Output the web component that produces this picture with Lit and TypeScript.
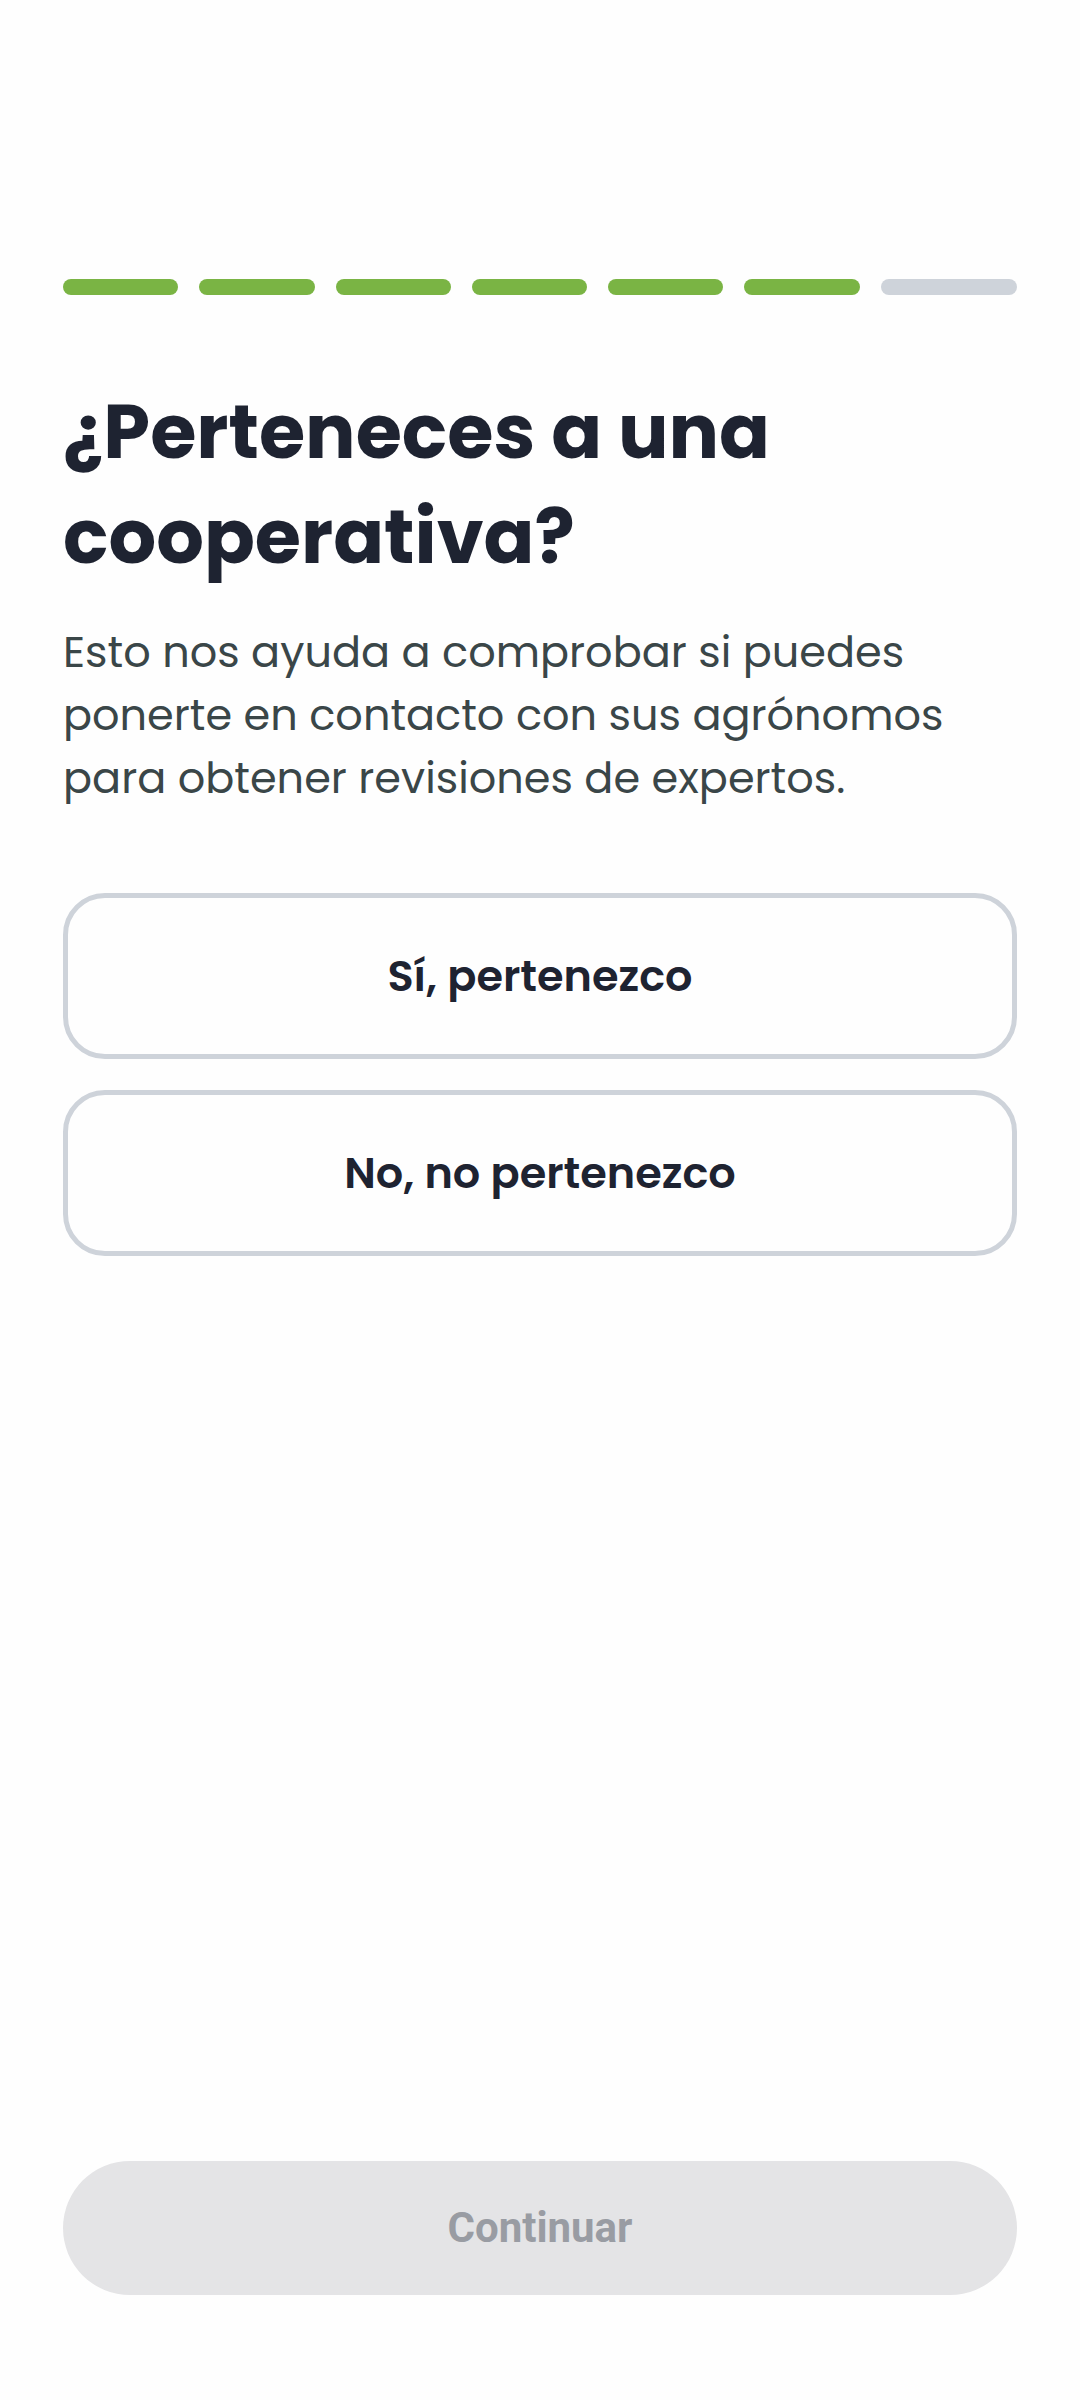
import { LitElement, html, css } from "lit";
import { customElement, property, state } from "lit/decorators.js";
import { classMap } from "lit/directives/class-map.js";

@customElement("step-progress")
class StepProgress extends LitElement {
  @property({ type: Number }) total = 7;
  @property({ type: Number }) current = 0;

  static styles = css`
    :host {
      display: block;
    }

    .steps {
      display: grid;
      grid-auto-flow: column;
      grid-auto-columns: 1fr;
    }

    .step {
      padding-right: 21px;
    }

    .step:last-child {
      padding-right: 0;
    }

    .bar {
      height: 16px;
      border-radius: 8px;
      background-color: #ced3da;
    }

    .done {
      background-color: #7ab444;
    }
  `;

  render() {
    return html`
      <div
        class="steps"
        role="progressbar"
        aria-valuemin="0"
        aria-valuemax=${this.total}
        aria-valuenow=${this.current}
      >
        ${Array.from(
          { length: this.total },
          (_, i) => html`
            <div class="step">
              <div class=${classMap({ bar: true, done: i < this.current })}></div>
            </div>
          `
        )}
      </div>
    `;
  }
}

@customElement("app-root")
class AppRoot extends LitElement {
  @state() private answer = "";

  private options = [
    { value: "yes", label: "Sí, pertenezco" },
    { value: "no", label: "No, no pertenezco" },
  ];

  static styles = css`
    :host {
      display: block;
      font-family: Poppins, Inter, sans-serif;
      color: #1e2331;
      background-color: #fefefe;
    }

    main {
      box-sizing: border-box;
      min-height: 100vh;
      display: flex;
      flex-direction: column;
      padding: 279px 63px 105px;
    }

    h1 {
      margin: 84px 0 32px;
      font-size: 75px;
      line-height: 105px;
      font-weight: 700;
    }

    p {
      margin: 0;
      font-size: 43px;
      line-height: 63px;
      color: #3a4648;
    }

    button {
      box-sizing: border-box;
      width: 100%;
      margin: 0;
      cursor: pointer;
    }

    .options {
      display: flex;
      flex-direction: column;
      gap: 31px;
      margin: 83px 0;
    }

    .option {
      padding: 47px 42px;
      border: 5px solid #ced3da;
      border-radius: 42px;
      background: none;
      color: inherit;
      font-family: inherit;
      font-size: 43px;
      line-height: 62px;
      font-weight: 600;
    }

    .selected {
      border-color: #7ab444;
    }

    .continue {
      margin-top: auto;
      padding: 36px 42px;
      border: none;
      border-radius: 67px;
      background-color: #7ab444;
      color: #fefefe;
      font-family: Roboto, sans-serif;
      font-size: 42px;
      line-height: 62px;
      font-weight: 700;
    }

    .continue:disabled {
      background-color: #e4e4e6;
      color: #999ca3;
      cursor: default;
    }
  `;

  render() {
    return html`
      <main>
        <step-progress total="7" current="6"></step-progress>
        <h1>¿Perteneces a una cooperativa?</h1>
        <p>
          Esto nos ayuda a comprobar si puedes ponerte en contacto con sus
          agrónomos para obtener revisiones de expertos.
        </p>
        <div class="options">
          ${this.options.map(
            ({ value, label }) => html`
              <button
                type="button"
                class=${classMap({ option: true, selected: this.answer === value })}
                aria-pressed=${this.answer === value}
                @click=${() => (this.answer = value)}
              >
                ${label}
              </button>
            `
          )}
        </div>
        <button type="button" class="continue" ?disabled=${!this.answer}>
          Continuar
        </button>
      </main>
    `;
  }
}
